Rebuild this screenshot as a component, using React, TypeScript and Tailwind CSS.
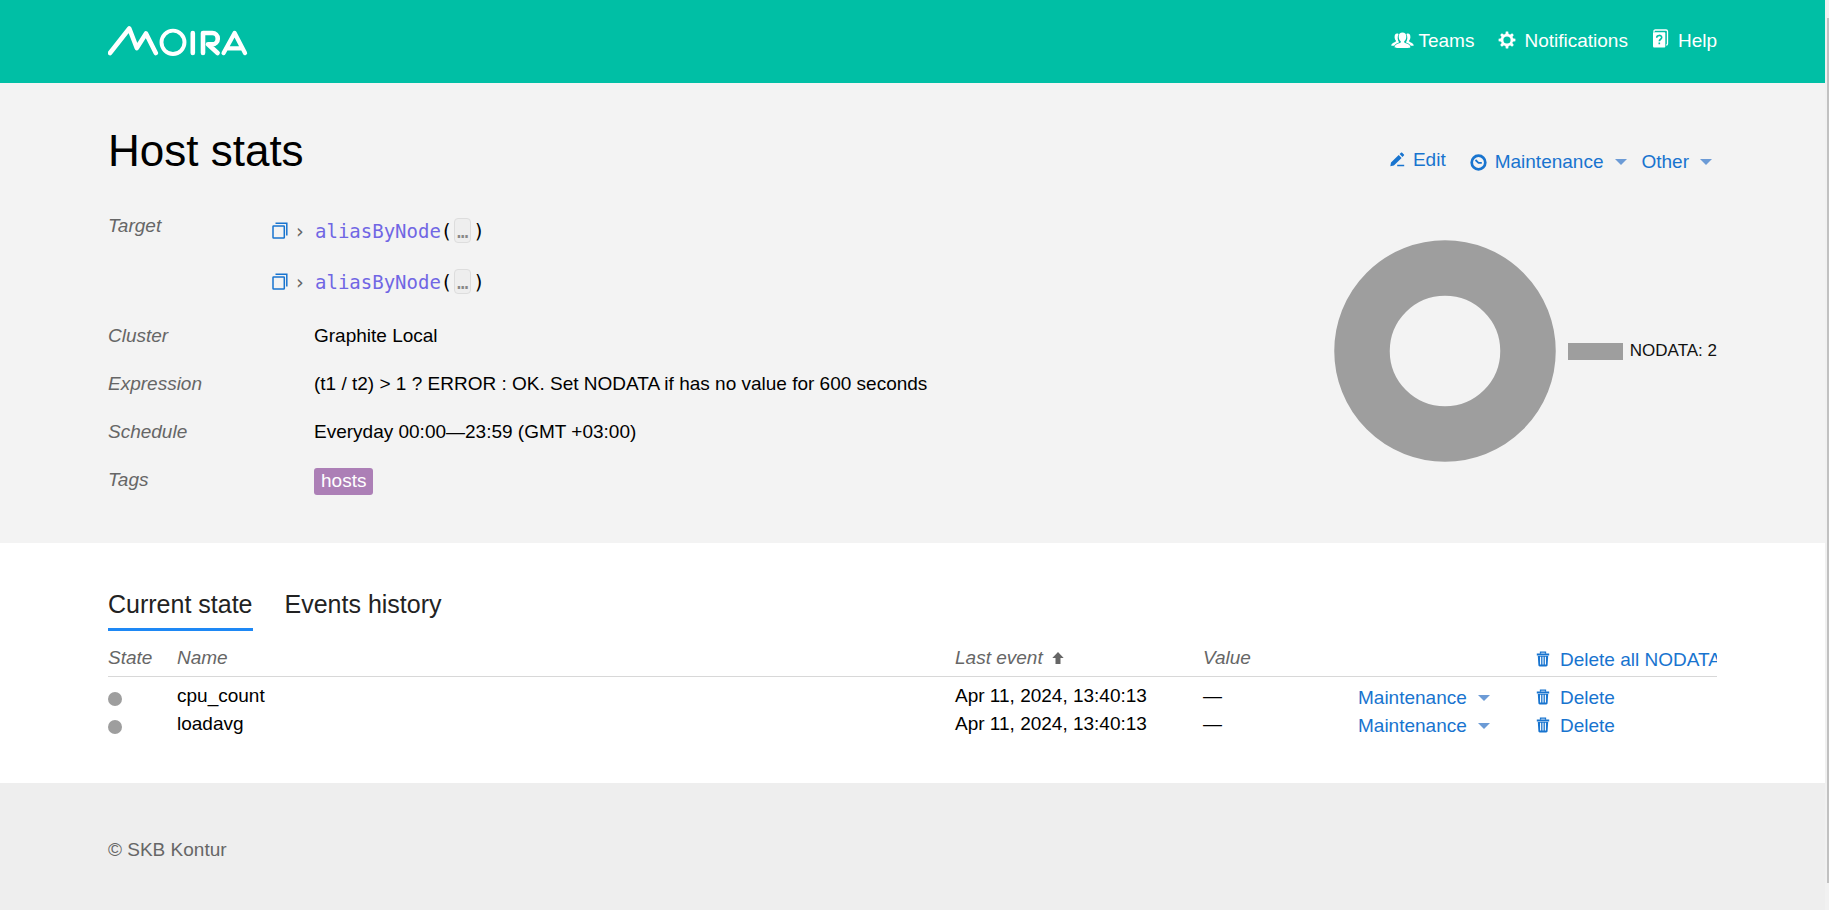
import React from "react";

function Logo() {
  return (
    <svg width="140" height="32" viewBox="108 25 140 32" fill="none" stroke="#fff" strokeWidth="4.6" strokeLinecap="round" strokeLinejoin="round" role="img" aria-label="Moira">
      <path d="M110 53 129.300 28.500 136.800 48 146 33.500 155.800 53" />
      <ellipse cx="173" cy="42.300" rx="11.500" ry="11.700" strokeWidth="3.900" />
      <path d="M192.800 33v20" />
      <path d="M203 53V33h9.300a5.400 5.600 0 0 1 0 11.300H208l9.600 8.700" />
      <path d="M223.600 53 234.600 33 245 53M227.500 48.300h14.500" strokeWidth="4.300" />
    </svg>
  );
}

function TeamsIcon() {
  return (
    <svg width="23" height="17" viewBox="0 0 23 17" fill="currentColor" aria-hidden="true">
      <path d="M11.500 .5c2.400 0 3.800 1.600 3.800 3.900 0 2.100-.9 4-2.100 4.900v1.200c1.300.9 6.200 1.600 6.200 4.700 0 .6-3.900.9-7.900.9s-7.900-.3-7.900-.9c0-3.100 4.900-3.800 6.200-4.700V9.300C8.600 8.400 7.700 6.500 7.700 4.400 7.700 2.100 9.100.5 11.500.5Z" />
      <path d="M7.600 1.900C4.700 .8 3.600 2.700 3.600 5c0 1.500.5 2.800 1.300 3.600v1C3.700 10.600.3 11.200.3 13.700h2.900c1-1.900 3.700-2.500 4.900-3.400-1.600-2-2-5.800-.5-8.400ZM15.400 1.900c2.900-1.100 4 .8 4 3.100 0 1.500-.5 2.800-1.300 3.600v1c1.200 1 4.600 1.600 4.600 4.100h-2.900c-1-1.900-3.700-2.500-4.900-3.400 1.600-2 2-5.800.5-8.400Z" />
    </svg>
  );
}

const teeth = [0, 45, 90, 135, 180, 225, 270, 315];

function GearIcon() {
  return (
    <svg width="18" height="18" viewBox="0 0 18 18" aria-hidden="true">
      <circle cx="9" cy="9" r="4.900" fill="none" stroke="currentColor" strokeWidth="2.600" />
      {teeth.map((a) => (
        <path key={a} d="M7.300 4 7.800 .6h2.400L10.700 4Z" fill="currentColor" transform={`rotate(${a} 9 9)`} />
      ))}
    </svg>
  );
}

function HelpIcon() {
  return (
    <svg width="17" height="19" viewBox="0 0 17 19" fill="none" aria-hidden="true">
      <path d="M2 3V2.200C2 1.300 2.600 1 3.300 1H14c1 0 1.500.5 1.500 1.500v12.300c0 .8-.4 1.200-1.300 1.200" stroke="currentColor" strokeWidth="1.300" />
      <path d="M1 3.200h11c.9 0 1.300.4 1.300 1.300v12.700c0 .9-.4 1.300-1.300 1.300H2.500C1.500 18.500 1 18 1 17Z" fill="currentColor" />
      <path d="M4.700 8.700c0-3 5-3 5-.2 0 1.800-2.400 1.700-2.400 3.700M7.300 13.600v1.700" stroke="#00bfa5" strokeWidth="1.600" />
    </svg>
  );
}

function EditIcon() {
  return (
    <svg width="15" height="15" viewBox="0 0 15 15" fill="currentColor" aria-hidden="true">
      <path d="M.3 14.200 1 10.600 8.700 3l2.900 2.900-7.700 7.600ZM9.600 2.100 11 .7c.4-.4.8-.4 1.200 0l1.700 1.700c.4.400.4.800 0 1.200L12.500 5ZM7.200 12.700h7v1.500h-7Z" />
    </svg>
  );
}

function ClockIcon() {
  return (
    <svg width="17" height="17" viewBox="0 0 17 17" fill="none" stroke="currentColor" aria-hidden="true">
      <circle cx="8.500" cy="8.500" r="6.800" strokeWidth="2.700" />
      <path d="M5.500 6 8.500 8.900h3.300" strokeWidth="1.800" />
    </svg>
  );
}

function CopyIcon() {
  return (
    <svg width="16" height="17" viewBox="0 0 16 17" fill="none" stroke="currentColor" strokeWidth="1.500" aria-hidden="true">
      <rect x="1" y="4" width="11.300" height="12" rx=".6" />
      <path d="M3.500 1.200h11.300v12.300" />
    </svg>
  );
}

function TrashIcon() {
  return (
    <svg width="14" height="16" viewBox="0 0 14 16" aria-hidden="true">
      <path d="M4.500 2.800V1.200h5v1.600" fill="none" stroke="currentColor" strokeWidth="1.300" />
      <path d="M.8 2.600h12.400v2H.8ZM1.800 5.100h10.400L11.600 14c-.1 1-.5 1.400-1.400 1.400H3.800c-.9 0-1.300-.4-1.400-1.400Z" fill="currentColor" />
      <path d="M4.600 5.800v7.800M7 5.800v7.800M9.400 5.800v7.800" stroke="#fff" strokeWidth="1.100" />
    </svg>
  );
}

function Caret() {
  return (
    <svg width="12" height="6" viewBox="0 0 12 6" aria-hidden="true">
      <path d="M0 0h12L6 6Z" fill="#6c9bd6" />
    </svg>
  );
}

function ArrowUp() {
  return (
    <svg width="12" height="12" viewBox="0 0 12 12" className="inline-block align-baseline" aria-hidden="true">
      <path d="M6 0 11.700 6H8.500v6h-5V6H.3Z" fill="#666" />
    </svg>
  );
}

function Target() {
  return (
    <div className="-ml-[42px] flex h-[25px] items-center">
      <button type="button" aria-label="Copy target" className="text-[#1874cf]">
        <CopyIcon />
      </button>
      <div className="flex items-center font-['DejaVu_Sans_Mono',monospace]">
        <span className="w-[27px] pl-[6px] text-[#666]">›</span>
        <span className="text-[#7066e4]">aliasByNode</span>
        <span>(</span>
        <button type="button" aria-label="Unfold" className="mx-[2px] h-[25px] w-[17px] rounded-[4px] border border-[#ddd] bg-[#eee] text-center leading-[22px] text-[#888]">
          <span className="-mx-1">…</span>
        </button>
        <span>)</span>
      </div>
    </div>
  );
}

function Field({ label, children }: { label: string; children: React.ReactNode }) {
  return (
    <div className="flex">
      <dt className="w-[206px] shrink-0 text-[#666] italic">{label}</dt>
      <dd>{children}</dd>
    </div>
  );
}

const metrics = [
  { name: "cpu_count", time: "Apr 11, 2024, 13:40:13" },
  { name: "loadavg", time: "Apr 11, 2024, 13:40:13" },
];

export default function App() {
  return (
    <div className="flex min-h-screen font-['Liberation_Sans',Arial,sans-serif] text-[19px] leading-6 text-black">
      <div className="flex min-w-0 flex-1 flex-col">
        <header className="flex h-[83px] items-center justify-between bg-[#00bfa5] px-[108px] pb-[2px] text-white">
          <a href="#home">
            <Logo />
          </a>
          <nav className="flex gap-6">
            <a href="#teams" className="flex items-center gap-1">
              <TeamsIcon />
              Teams
            </a>
            <a href="#notifications" className="flex items-center gap-2">
              <span className="pb-[2px]"><GearIcon /></span>
              Notifications
            </a>
            <a href="#help" className="flex items-center gap-[9px]">
              <span className="pb-1"><HelpIcon /></span>
              Help
            </a>
          </nav>
        </header>

        <section className="bg-[#f3f3f3] px-[108px] pt-[42px] pb-12">
          <div className="flex items-start justify-between">
            <h1 className="text-[44px] leading-[52px]">Host stats</h1>
            <div className="flex gap-6 pt-[23px] text-[#1874cf]">
              <a href="#edit" className="flex h-6 items-center gap-2">
                <span className="pb-[2px]"><EditIcon /></span>
                Edit
              </a>
              <div className="flex gap-[14px] pt-[2px] pr-[5px]">
                <button type="button" className="flex items-center gap-2">
                  <ClockIcon />
                  Maintenance
                  <span className="pl-1"><Caret /></span>
                </button>
                <button type="button" className="flex items-center gap-[11px]">
                  Other
                  <Caret />
                </button>
              </div>
            </div>
          </div>
          <div className="mt-[37px] flex justify-between">
            <dl className="flex flex-col gap-6">
              <Field label="Target">
                <div className="flex flex-col gap-[26px] pt-1 pb-[6px]">
                  <Target />
                  <Target />
                </div>
              </Field>
              <Field label="Cluster">Graphite Local</Field>
              <Field label="Expression">(t1 / t2) &gt; 1 ? ERROR : OK. Set NODATA if has no value for 600 seconds</Field>
              <Field label="Schedule">Everyday 00:00—23:59 (GMT +03:00)</Field>
              <Field label="Tags">
                <div className="h-[27px] rounded-[3px] bg-[#ac7fb6] px-[7px] leading-[26px] text-white">hosts</div>
              </Field>
            </dl>
            <div className="mt-[26px] flex items-center gap-3 self-start">
              <svg width="222" height="222" viewBox="0 0 222 222" role="img" aria-label="NODATA: 2">
                <circle cx="111" cy="111" r="83" fill="none" stroke="#9e9e9e" strokeWidth="55.500" />
              </svg>
              <div className="flex items-center gap-[7px] text-[17px] text-[#111]">
                <span className="h-[17px] w-[55px] bg-[#9e9e9e]" />
                NODATA: 2
              </div>
            </div>
          </div>
        </section>

        <main className="bg-white px-[108px] py-[45px]">
          <div className="flex gap-8 text-[25px] leading-8 text-[#222]" role="tablist">
            <button type="button" role="tab" aria-selected="true" className="border-b-[3px] border-[#1e88f5] pb-2">
              Current state
            </button>
            <button type="button" role="tab" aria-selected="false" className="border-b-[3px] border-transparent pb-2">
              Events history
            </button>
          </div>
          <table className="mt-[15px] w-full table-fixed text-left">
            <thead>
              <tr className="border-b border-[#d8d8d8] text-[#666] italic">
                <th className="w-[69px] pb-[6px] font-normal">State</th>
                <th className="pb-[6px] font-normal">Name</th>
                <th className="w-[248px] pb-[6px] font-normal">
                  Last event <span className="pl-1"><ArrowUp /></span>
                </th>
                <th className="w-[155px] pb-[6px] font-normal">Value</th>
                <th className="w-[178px] pb-[6px]" />
                <th className="w-[181px] overflow-hidden pb-1 font-normal not-italic">
                  <button type="button" className="flex gap-[10px] pt-[2px] whitespace-nowrap text-[#1874cf]">
                    <span className="shrink-0 pt-[3px]"><TrashIcon /></span>
                    Delete all NODATA
                  </button>
                </th>
              </tr>
            </thead>
            <tbody>
              {metrics.map((m) => (
                <tr key={m.name} className="align-top first:[&>td]:pt-[7px]">
                  <td className="py-[2px]">
                    <div className="mt-2 size-[14px] rounded-full bg-[#9e9e9e]" />
                  </td>
                  <td className="py-[2px]">{m.name}</td>
                  <td className="py-[2px]">{m.time}</td>
                  <td className="py-[2px]">—</td>
                  <td className="py-[2px]">
                    <button type="button" className="-mb-[2px] flex items-center gap-[11px] pt-[2px] text-[#1874cf]">
                      Maintenance
                      <Caret />
                    </button>
                  </td>
                  <td className="py-[2px]">
                    <button type="button" className="-mb-[2px] flex gap-[10px] pt-[2px] text-[#1874cf]">
                      <span className="pt-[3px]"><TrashIcon /></span>
                      Delete
                    </button>
                  </td>
                </tr>
              ))}
            </tbody>
          </table>
        </main>

        <footer className="flex-1 bg-[#eee] px-[108px] pt-[55px] pb-6 text-[#666]">© SKB Kontur</footer>
      </div>
      <div className="flex w-1 flex-col bg-[#f1f1f1] pt-[18px] pb-[27px] pl-[2px]" aria-hidden="true">
        <div className="flex-1 bg-[#c1c1c1]" />
      </div>
    </div>
  );
}
